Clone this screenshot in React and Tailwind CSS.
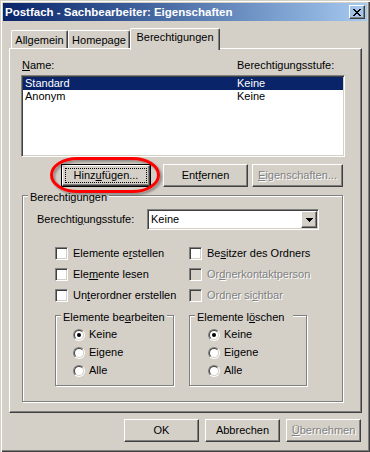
import React from "react";

const raised =
  "border border-t-white border-l-white border-r-[#404040] border-b-[#404040] shadow-[inset_-1px_-1px_0_#808080]";
const sunken =
  "border border-t-[#808080] border-l-[#808080] border-r-white border-b-white shadow-[inset_1px_1px_0_#404040,inset_-1px_-1px_0_#d4d0c8]";
const etched = "border border-[#808080] shadow-[inset_1px_1px_0_#fff,1px_1px_0_#fff]";
const grayText = "text-[#808080] [text-shadow:1px_1px_0_#fff]";

function Button({ className, children, isDefault, disabled }) {
  if (isDefault) {
    return (
      <div className={`h-[23px] border border-black ${className}`}>
        <div className={`h-full p-[2px] ${raised}`}>
          <div className="h-full flex items-center justify-center border border-dotted border-black">
            {children}
          </div>
        </div>
      </div>
    );
  }
  return (
    <div className={`h-[23px] flex items-center justify-center ${raised} ${className} ${disabled ? grayText : ""}`}>
      {children}
    </div>
  );
}

function Check({ children, disabled }) {
  return (
    <div className="flex items-center h-[13px]">
      <div className={`w-[13px] h-[13px] shrink-0 ${sunken} ${disabled ? "bg-[#d4d0c8]" : "bg-white"}`} />
      <span className={`ml-[5px] whitespace-nowrap ${disabled ? grayText : ""}`}>{children}</span>
    </div>
  );
}

function Radio({ children, checked }) {
  return (
    <div className="flex items-center h-[13px]">
      <div className="w-[12px] h-[12px] shrink-0 rounded-full border border-t-[#808080] border-l-[#808080] border-r-white border-b-white">
        <div className="w-full h-full rounded-full border border-t-[#404040] border-l-[#404040] border-r-[#d4d0c8] border-b-[#d4d0c8] bg-white flex items-center justify-center">
          {checked && <div className="w-[4px] h-[4px] rounded-full bg-black" />}
        </div>
      </div>
      <span className="ml-[4px]">{children}</span>
    </div>
  );
}

function Group({ label, className, children }) {
  return (
    <div className={`relative ${etched} ${className}`}>
      <span className="absolute left-[5px] top-[-5px] px-[2px] bg-[#d4d0c8] whitespace-nowrap">{label}</span>
      {children}
    </div>
  );
}

export default function App() {
  return (
    <div className="relative w-[370px] h-[452px] overflow-hidden bg-[#d4d0c8] font-['Liberation_Sans',Tahoma,sans-serif] text-[11px] leading-[13px] text-black shadow-[inset_1px_1px_0_#d4d0c8,inset_2px_2px_0_#fff,inset_-1px_-1px_0_#404040,inset_-2px_-2px_0_#808080]">
      {/* TITLE */}
      <div className="mx-[3px] mt-[3px] h-[18px] flex items-center justify-between pl-[2px] pr-[2px] bg-linear-to-r from-[#0a246a] to-[#a6caf0]">
        <span className="font-bold text-white text-[11.5px] whitespace-nowrap">Postfach - Sachbearbeiter: Eigenschaften</span>
        <div className={`w-[16px] h-[14px] flex items-center justify-center ${raised}`}>
          <svg width="8" height="7" viewBox="0 0 8 7" shapeRendering="crispEdges">
            <path d="M0 0h2l2 2.5L6 0h2L5 3.5L8 7H6L4 4.5L2 7H0l3-3.5z" fill="#000" />
          </svg>
        </div>
      </div>

      {/* TABS */}
      <div className="relative z-10 ml-[11px] mt-[7px] h-[20px] flex items-start">
        <div className="mt-[2px] h-[18px] w-[57px] pt-[1px] flex items-center justify-center border-t border-l border-white border-r border-r-[#404040] rounded-t-[2px] shadow-[inset_-1px_0_0_#808080]">
          Allgemein
        </div>
        <div className="mt-[2px] h-[18px] w-[62px] pt-[1px] flex items-center justify-center border-t border-l border-white border-r border-r-[#404040] rounded-t-[2px] shadow-[inset_-1px_0_0_#808080]">
          Homepage
        </div>
        <div className="h-[22px] w-[90px] pt-[2px] flex justify-center bg-[#d4d0c8] border-t border-l border-white border-r border-r-[#404040] rounded-t-[2px] shadow-[inset_-1px_0_0_#808080]">
          Berechtigungen
        </div>
      </div>

      {/* PANEL */}
      <div className={`ml-[9px] w-[353px] h-[365px] flex flex-col items-start ${raised}`}>
        <div className="mt-[10px] ml-[12px] flex">
          <span className="w-[215px]">
            <u>N</u>ame:
          </span>
          <span>Berechtigungsstufe:</span>
        </div>

        <div className={`mt-[3px] ml-[11px] w-[324px] h-[82px] bg-white pt-[1px] px-[1px] ${sunken}`}>
          <div className="h-[13px] flex items-center bg-[#0a246a] text-white pl-[2px]">
            <span className="w-[212px]">Standard</span>
            <span>Keine</span>
          </div>
          <div className="h-[13px] flex items-center pl-[2px]">
            <span className="w-[212px]">Anonym</span>
            <span>Keine</span>
          </div>
        </div>

        <div className="mt-[7px] ml-[51px] flex">
          <Button isDefault className="w-[90px]">
            <span>
              Hinz<u>u</u>fügen...
            </span>
          </Button>
          <Button className="ml-[12px] w-[85px]">
            <span>
              Ent<u>f</u>ernen
            </span>
          </Button>
          <Button disabled className="ml-[4px] w-[91px]">
            <span>
              <u>E</u>igenschaften...
            </span>
          </Button>
        </div>

        <Group label="Berechtigungen" className="mt-[8px] ml-[12px] w-[321px] h-[207px]">
          <div className="mt-[13px] ml-[14px] flex items-center">
            <span className="w-[110px]">
              Berechti<u>g</u>ungsstufe:
            </span>
            <div className={`w-[172px] h-[21px] bg-white p-[1px] flex items-center ${sunken}`}>
              <span className="flex-1 pl-[2px]">Keine</span>
              <div className={`w-[16px] h-[17px] bg-[#d4d0c8] flex items-center justify-center ${raised}`}>
                <svg width="7" height="4" viewBox="0 0 7 4" shapeRendering="crispEdges">
                  <path d="M0 0h7L3.5 4z" fill="#000" />
                </svg>
              </div>
            </div>
          </div>

          <div className="mt-[17px] ml-[32px] grid grid-cols-[134px_auto] gap-y-[8px]">
            <Check>
              Elemente e<u>r</u>stellen
            </Check>
            <Check>
              Be<u>s</u>itzer des Ordners
            </Check>
            <Check>
              Ele<u>m</u>ente lesen
            </Check>
            <Check disabled>
              Or<u>d</u>nerkontaktperson
            </Check>
            <Check>
              Un<u>t</u>erordner erstellen
            </Check>
            <Check disabled>
              Ordner si<u>c</u>htbar
            </Check>
          </div>

          <div className="mt-[13px] ml-[32px] flex gap-[15px]">
            <Group
              label={
                <span>
                  Elemente be<u>a</u>rbeiten
                </span>
              }
              className="w-[119px] h-[71px]"
            >
              <div className="mt-[12px] ml-[17px] flex flex-col gap-[5px]">
                <Radio checked>Keine</Radio>
                <Radio>Eigene</Radio>
                <Radio>Alle</Radio>
              </div>
            </Group>
            <Group
              label={
                <span>
                  Elemente l<u>ö</u>schen&nbsp;&nbsp;
                </span>
              }
              className="w-[118px] h-[71px]"
            >
              <div className="mt-[12px] ml-[18px] flex flex-col gap-[5px]">
                <Radio checked>Keine</Radio>
                <Radio>Eigene</Radio>
                <Radio>Alle</Radio>
              </div>
            </Group>
          </div>
        </Group>
      </div>

      {/* BOTTOM BUTTONS */}
      <div className="mt-[6px] ml-[124px] flex gap-[6px]">
        <Button className="w-[75px]">OK</Button>
        <Button className="w-[75px]">Abbrechen</Button>
        <Button disabled className="w-[75px]">
          <span>
            <u>Ü</u>bernehmen
          </span>
        </Button>
      </div>

      {/* RED MARK */}
      <svg className="absolute left-[48px] top-[155px]" width="118" height="44" viewBox="0 0 118 44">
        <defs>
          <filter id="sh" x="-10%" y="-30%" width="120%" height="160%">
            <feDropShadow dx="2" dy="2" stdDeviation="1.2" floodColor="#000" floodOpacity="0.35" />
          </filter>
        </defs>
        <rect x="3.5" y="3.5" width="107" height="33" rx="26" ry="16.5" fill="none" stroke="#ff0000" strokeWidth="3" filter="url(#sh)" />
      </svg>
    </div>
  );
}
